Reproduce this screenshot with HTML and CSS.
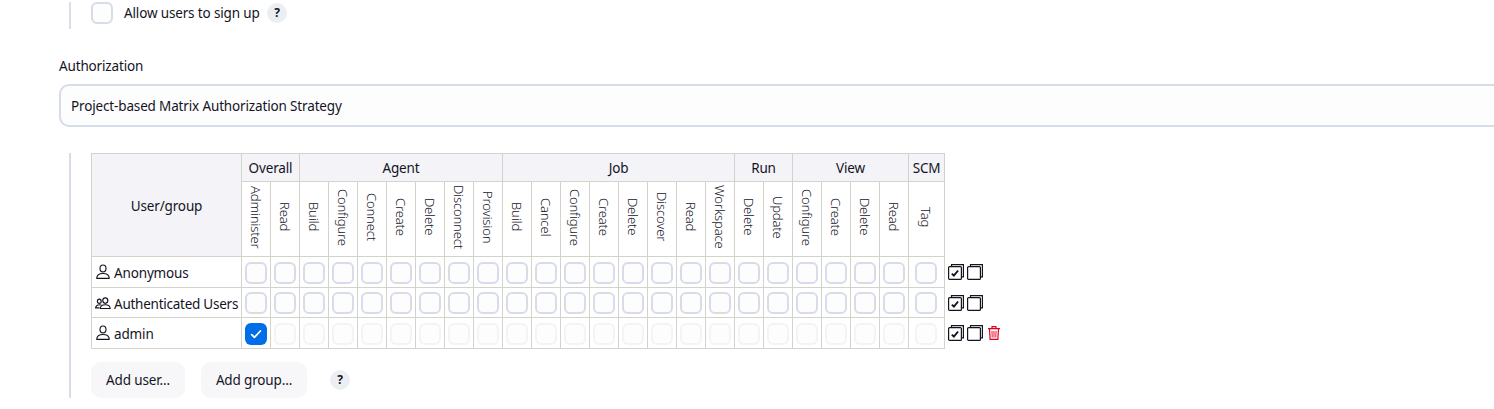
FILE: index.html
```html
<!DOCTYPE html>
<html lang="en">
<head>
<meta charset="utf-8">
<title>Security</title>
<link rel="stylesheet" href="styles.css">
</head>
<body>
<svg class="defs" aria-hidden="true">
  <symbol id="person" viewBox="0 0 16 16"><g fill="none" stroke="#14141f" stroke-width="1.150" stroke-linejoin="round"><ellipse cx="8" cy="4.400" rx="3" ry="3.400"/><path d="M1.700 14.300c.2-3.200 2.900-4.800 6.300-4.800s6.100 1.600 6.300 4.800z"/></g></symbol>
  <symbol id="people" viewBox="0 0 16 16"><g fill="none" stroke="#14141f" stroke-width="1.150" stroke-linejoin="round"><ellipse cx="10.300" cy="5.600" rx="2.500" ry="2.700"/><path d="M5.300 13.500c.2-2.700 2.300-3.800 5-3.800s4.700 1.100 4.900 3.800z"/><ellipse cx="4.300" cy="6.200" rx="1.900" ry="2.100"/><path d="M6.300 10C3.300 9.200 .8 10.500.6 12.900h3.900"/></g></symbol>
  <symbol id="all" viewBox="0 0 16 16"><path d="M3.500 2.500V.6h11.900v12.300h-2" fill="none" stroke="#14141f" stroke-width="1.200"/><rect x=".6" y="2.600" width="12.800" height="12.800" rx="1" fill="#fff" stroke="#14141f" stroke-width="1.200"/><path d="M3.800 9.600l2.100 2.100 4.200-5.200" fill="none" stroke="#14141f" stroke-width="1.900"/></symbol>
  <symbol id="none" viewBox="0 0 16 16"><path d="M3.500 2.500V.6h11.900v12.300h-2" fill="none" stroke="#14141f" stroke-width="1.200"/><rect x=".6" y="2.600" width="12.800" height="12.800" rx="1" fill="#fff" stroke="#14141f" stroke-width="1.200"/></symbol>
  <symbol id="trash" viewBox="0 0 12 14"><g fill="none" stroke="#e6001f" stroke-width="1.200"><path d="M0 2.600h12M4 2.400V.7h4v1.700M1.500 2.800l.6 10.600h7.800l.6-10.600"/><path d="M4 5l.2 6.500M6 5v6.500M8 5l-.2 6.500" stroke-width=".9"/></g></symbol>
</svg>
<main class="page">
  <section class="nested signup">
    <label class="check-label"><input type="checkbox" class="cb"><span class="t-allow">Allow users to sign up</span></label>
    <span class="help">?</span>
  </section>
  <div class="label">Authorization</div>
  <div class="select"><span class="t-select">Project-based Matrix Authorization Strategy</span></div>
  <section class="nested strategy">
    <div class="matrix">
      <div class="h corner">User/group</div>
      <div class="h s2">Overall</div><div class="h s7">Agent</div><div class="h s8">Job</div><div class="h s2">Run</div><div class="h s4">View</div><div class="h">SCM</div><div class="side"></div>
      <div class="p"><span>Administer</span></div><div class="p"><span>Read</span></div>
      <div class="p"><span>Build</span></div><div class="p"><span>Configure</span></div><div class="p"><span>Connect</span></div><div class="p"><span>Create</span></div><div class="p"><span>Delete</span></div><div class="p"><span>Disconnect</span></div><div class="p"><span>Provision</span></div>
      <div class="p"><span>Build</span></div><div class="p"><span>Cancel</span></div><div class="p"><span>Configure</span></div><div class="p"><span>Create</span></div><div class="p"><span>Delete</span></div><div class="p"><span>Discover</span></div><div class="p"><span>Read</span></div><div class="p"><span>Workspace</span></div>
      <div class="p"><span>Delete</span></div><div class="p"><span>Update</span></div>
      <div class="p"><span>Configure</span></div><div class="p"><span>Create</span></div><div class="p"><span>Delete</span></div><div class="p"><span>Read</span></div>
      <div class="p"><span>Tag</span></div><div class="side"></div>

      <div class="u"><svg><use href="#person"/></svg><span>Anonymous</span></div>
      <div class="c"><input type="checkbox" class="cb"></div><div class="c"><input type="checkbox" class="cb"></div><div class="c"><input type="checkbox" class="cb"></div><div class="c"><input type="checkbox" class="cb"></div><div class="c"><input type="checkbox" class="cb"></div><div class="c"><input type="checkbox" class="cb"></div><div class="c"><input type="checkbox" class="cb"></div><div class="c"><input type="checkbox" class="cb"></div>
      <div class="c"><input type="checkbox" class="cb"></div><div class="c"><input type="checkbox" class="cb"></div><div class="c"><input type="checkbox" class="cb"></div><div class="c"><input type="checkbox" class="cb"></div><div class="c"><input type="checkbox" class="cb"></div><div class="c"><input type="checkbox" class="cb"></div><div class="c"><input type="checkbox" class="cb"></div><div class="c"><input type="checkbox" class="cb"></div>
      <div class="c"><input type="checkbox" class="cb"></div><div class="c"><input type="checkbox" class="cb"></div><div class="c"><input type="checkbox" class="cb"></div><div class="c"><input type="checkbox" class="cb"></div><div class="c"><input type="checkbox" class="cb"></div><div class="c"><input type="checkbox" class="cb"></div><div class="c"><input type="checkbox" class="cb"></div><div class="c scm"><input type="checkbox" class="cb"></div>
      <div class="side"><svg><use href="#all"/></svg><svg><use href="#none"/></svg></div>

      <div class="u"><svg><use href="#people"/></svg><span class="t-auth">Authenticated Users</span></div>
      <div class="c mid"><input type="checkbox" class="cb"></div><div class="c mid"><input type="checkbox" class="cb"></div><div class="c mid"><input type="checkbox" class="cb"></div><div class="c mid"><input type="checkbox" class="cb"></div><div class="c mid"><input type="checkbox" class="cb"></div><div class="c mid"><input type="checkbox" class="cb"></div><div class="c mid"><input type="checkbox" class="cb"></div><div class="c mid"><input type="checkbox" class="cb"></div>
      <div class="c mid"><input type="checkbox" class="cb"></div><div class="c mid"><input type="checkbox" class="cb"></div><div class="c mid"><input type="checkbox" class="cb"></div><div class="c mid"><input type="checkbox" class="cb"></div><div class="c mid"><input type="checkbox" class="cb"></div><div class="c mid"><input type="checkbox" class="cb"></div><div class="c mid"><input type="checkbox" class="cb"></div><div class="c mid"><input type="checkbox" class="cb"></div>
      <div class="c mid"><input type="checkbox" class="cb"></div><div class="c mid"><input type="checkbox" class="cb"></div><div class="c mid"><input type="checkbox" class="cb"></div><div class="c mid"><input type="checkbox" class="cb"></div><div class="c mid"><input type="checkbox" class="cb"></div><div class="c mid"><input type="checkbox" class="cb"></div><div class="c mid"><input type="checkbox" class="cb"></div><div class="c mid scm"><input type="checkbox" class="cb"></div>
      <div class="side"><svg><use href="#all"/></svg><svg><use href="#none"/></svg></div>

      <div class="u"><svg><use href="#person"/></svg><span>admin</span></div>
      <div class="c"><span class="cb on"><svg viewBox="0 0 22 22"><path d="M6.700 11.600l2.700 2.700 6-6.300" fill="none" stroke="#fff" stroke-width="1.800" stroke-linecap="round" stroke-linejoin="round"/></svg></span></div><div class="c"><input type="checkbox" class="cb" disabled></div><div class="c"><input type="checkbox" class="cb" disabled></div><div class="c"><input type="checkbox" class="cb" disabled></div><div class="c"><input type="checkbox" class="cb" disabled></div><div class="c"><input type="checkbox" class="cb" disabled></div><div class="c"><input type="checkbox" class="cb" disabled></div><div class="c"><input type="checkbox" class="cb" disabled></div>
      <div class="c"><input type="checkbox" class="cb" disabled></div><div class="c"><input type="checkbox" class="cb" disabled></div><div class="c"><input type="checkbox" class="cb" disabled></div><div class="c"><input type="checkbox" class="cb" disabled></div><div class="c"><input type="checkbox" class="cb" disabled></div><div class="c"><input type="checkbox" class="cb" disabled></div><div class="c"><input type="checkbox" class="cb" disabled></div><div class="c"><input type="checkbox" class="cb" disabled></div>
      <div class="c"><input type="checkbox" class="cb" disabled></div><div class="c"><input type="checkbox" class="cb" disabled></div><div class="c"><input type="checkbox" class="cb" disabled></div><div class="c"><input type="checkbox" class="cb" disabled></div><div class="c"><input type="checkbox" class="cb" disabled></div><div class="c"><input type="checkbox" class="cb" disabled></div><div class="c"><input type="checkbox" class="cb" disabled></div><div class="c scm"><input type="checkbox" class="cb" disabled></div>
      <div class="side"><svg><use href="#all"/></svg><svg><use href="#none"/></svg><svg class="trash"><use href="#trash"/></svg></div>
    </div>
    <div class="actions">
      <button class="btn add-user">Add user...</button>
      <button class="btn add-group">Add group...</button>
      <span class="help">?</span>
    </div>
  </section>
</main>
</body>
</html>
```
FILE: styles.css
```css
* { box-sizing: border-box; }
body {
  margin: 0;
  background: #fff;
  color: #14141f;
  font: 13.5px/20px "Noto Sans", "Open Sans", sans-serif;
  letter-spacing: -0.15px;
  overflow: hidden;
}
.defs { position: absolute; width: 0; height: 0; }
.page { padding: 2px 0 0 59px; height: 409px; overflow: hidden; }
.nested { margin-left: 10px; padding-left: 20px; border-left: 2px solid #d8dfe9; }
.strategy.nested { border-color: #d8dce8; }
.signup { display: flex; align-items: flex-start; height: 27px; }
.check-label { display: flex; gap: 11px; width: 176px; white-space: nowrap; }
.t-allow { padding-top: 1px; }
.cb {
  appearance: none;
  display: block;
  flex: none;
  width: 22px;
  height: 22px;
  margin: 0;
  border: 2px solid #d6dce8;
  border-radius: 6px;
  background: #fdfdfd;
}
.cb:disabled { border-color: #f3f3f8; }
.cb.on { border: 0; background: #006ee6; }
.cb.on svg { display: block; width: 22px; height: 22px; }
.help {
  width: 20px;
  height: 20px;
  margin-top: 1px;
  border-radius: 50%;
  background: #eceff2;
  font-size: 12px;
  font-weight: 700;
  text-align: center;
}
.label { margin-top: 27px; height: 20px; }
.select {
  display: flex;
  align-items: center;
  height: 43px;
  margin: 8px -20px 0 0;
  padding: 1px 0 0 10px;
  border: 2px solid #d6dce8;
  border-radius: 10px;
  background: #fdfdfd;
}
.strategy { margin-top: 26px; height: 245px; }
.matrix {
  display: grid;
  grid-template-columns: 151px repeat(23, 29px) 36px 60px;
  grid-template-rows: 29px 75px 31px 30px 31px;
}
.h, .p, .c, .u {
  display: flex;
  align-items: center;
  justify-content: center;
  min-width: 0;
  border: solid #d3d3cc;
  border-width: 0 1px 1px 0;
  white-space: nowrap;
}
.h { border-top-width: 1px; padding-top: 1px; background: #f3f3f8; }
.corner { grid-row: span 2; border-left-width: 1px; padding-top: 2px; }
.s2 { grid-column: span 2; }
.s4 { grid-column: span 4; }
.s7 { grid-column: span 7; }
.s8 { grid-column: span 8; }
.p span { writing-mode: vertical-rl; margin: 0 1px 4px 0; font-size: 13px; font-weight: 300; }
.c { align-items: flex-start; padding-top: 5px; }
.mid { padding-top: 4px; }
.scm { padding-right: 1px; }
.u { justify-content: flex-start; border-left-width: 1px; padding: 2px 0 0 3px; gap: 3px; }
.u svg { width: 16px; height: 16px; margin-top: -2px; flex: none; }
.t-auth { letter-spacing: -0.25px; }
.side { display: flex; align-items: flex-start; gap: 3px; padding: 7px 0 0 3px; }
.side svg { width: 16px; height: 16px; flex: none; }
.side .trash { width: 12px; height: 14px; margin: 1px 0 0 2px; }
.actions { display: flex; align-items: center; margin-top: 13px; }
.btn {
  height: 36px;
  padding: 0;
  border: 0;
  border-radius: 10px;
  background: #f7f7fa;
  color: inherit;
  font: inherit;
  letter-spacing: inherit;
}
.add-user { width: 94px; margin-right: 16px; }
.add-group { width: 106px; margin-right: 23px; }
.actions .help { margin-top: 0; }
```
